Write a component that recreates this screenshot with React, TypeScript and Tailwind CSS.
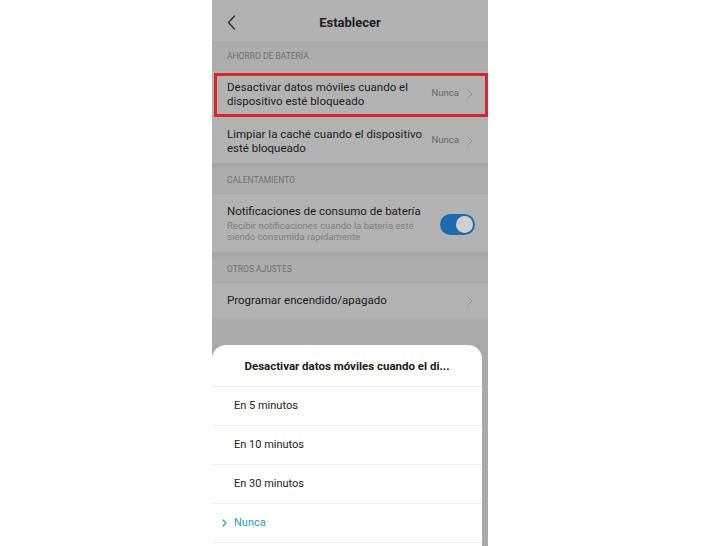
import React from "react";

const Chevron = ({ className = "" }: { className?: string }) => (
  <svg width="6" height="10" viewBox="0 0 6 10" className={className} fill="none">
    <path d="M1 1l4 4-4 4" stroke="currentColor" strokeWidth="1" strokeLinecap="round" strokeLinejoin="round" />
  </svg>
);

export default function App() {
  return (
    <div className="w-[705px] h-[546px] bg-white overflow-hidden" style={{ fontFamily: "Roboto, 'Noto Sans', sans-serif" }}>
      <div className="ml-[212px] w-[276px] h-[546px] bg-[#aaaaaa] flex flex-col">
        {/* header */}
        <div className="h-[43px] bg-[#b1b1b1] border-b border-[#a7a7a7] flex items-center relative shrink-0 pt-[3px]">
          <svg width="9" height="15" viewBox="0 0 9 15" className="ml-[15px] text-[#2a2a2a]" fill="none">
            <path d="M7.5 1L1.5 7.5l6 6.5" stroke="currentColor" strokeWidth="1.3" strokeLinecap="round" strokeLinejoin="round" />
          </svg>
          <div className="flex-1 text-center pr-[24px] text-[13px] font-bold text-[#1e1e1e]">Establecer</div>
        </div>
        {/* section 1 */}
        <div className="h-[27px] bg-[#adadad] border-b border-[#a7a7a7] flex items-center pl-[15px] text-[8.5px] text-[#6f6f6f] shrink-0">AHORRO DE BATERÍA</div>
        <div className="h-[48px] bg-[#b2b2b2] flex items-end pb-px pl-[2px] shrink-0">
          <div className="h-[44px] w-[274px] border-[3px] border-[#d8262e] flex items-center pl-[10px] pr-[12px] pb-[3px]">
            <div className="flex-1 text-[11.5px] leading-[14px] text-[#1c1c1c] whitespace-nowrap">Desactivar datos móviles cuando el<br />dispositivo esté bloqueado</div>
            <span className="text-[9.5px] text-[#666666] mr-[8px]">Nunca</span>
            <Chevron className="text-[#8e8e8e]" />
          </div>
        </div>
        <div className="h-[45px] bg-[#b2b2b2] flex items-center pl-[15px] pr-[15px] shrink-0">
          <div className="flex-1 text-[11.5px] leading-[14px] text-[#1c1c1c] whitespace-nowrap">Limpiar la caché cuando el dispositivo<br />esté bloqueado</div>
          <span className="text-[9.5px] text-[#666666] mr-[8px]">Nunca</span>
          <Chevron className="text-[#8e8e8e]" />
        </div>
        <div className="h-[4px] bg-[#a6a6a6] shrink-0" />
        {/* section 2 */}
        <div className="h-[27px] bg-[#adadad] border-b border-[#a7a7a7] flex items-center pl-[15px] text-[8.5px] text-[#6f6f6f] shrink-0">CALENTAMIENTO</div>
        <div className="h-[58px] bg-[#b2b2b2] flex items-center pl-[15px] pr-[13px] shrink-0">
          <div className="flex-1 flex flex-col">
            <div className="text-[11.5px] leading-[15px] text-[#1c1c1c] whitespace-nowrap">Notificaciones de consumo de batería</div>
            <div className="text-[9.5px] leading-[11px] text-[#7e7e7e] mt-[1px] whitespace-nowrap">Recibir notificaciones cuando la batería esté<br />siendo consumida rápidamente</div>
          </div>
          <div className="w-[35px] h-[21px] rounded-full bg-[#1d6cb0] flex items-center justify-end pr-[2px] mt-[2px]">
            <div className="w-[17px] h-[17px] rounded-full bg-[#cfcfcf]" />
          </div>
        </div>
        <div className="h-[5px] bg-[#a6a6a6] shrink-0" />
        {/* section 3 */}
        <div className="h-[26px] bg-[#adadad] border-b border-[#a7a7a7] flex items-center pl-[15px] text-[8.5px] text-[#6f6f6f] shrink-0">OTROS AJUSTES</div>
        <div className="h-[35px] bg-[#b2b2b2] flex items-center pl-[15px] pr-[15px] shrink-0">
          <div className="flex-1 text-[11.5px] text-[#1c1c1c]">Programar encendido/apagado</div>
          <Chevron className="text-[#8e8e8e]" />
        </div>
        <div className="h-[27px] shrink-0" />
        {/* bottom sheet */}
        <div className="w-[270px] flex-1 bg-white rounded-t-[14px] flex flex-col">
          <div className="h-[42px] border-b border-[#efefef] flex items-center justify-center text-[11.5px] font-bold text-[#1a1a1a] pt-[2px]">Desactivar datos móviles cuando el di...</div>
          <div className="h-[39px] border-b border-[#efefef] flex items-center pl-[22px] text-[11px] text-[#222]">En 5 minutos</div>
          <div className="h-[39px] border-b border-[#efefef] flex items-center pl-[22px] text-[11px] text-[#222]">En 10 minutos</div>
          <div className="h-[39px] border-b border-[#efefef] flex items-center pl-[22px] text-[11px] text-[#222]">En 30 minutos</div>
          <div className="h-[39px] border-b border-[#efefef] flex items-center pl-[10px] text-[11px] text-[#2a9cc4]">
            <svg width="5" height="8" viewBox="0 0 5 8" className="mr-[7px]" fill="none">
              <path d="M1 1l3 3-3 3" stroke="currentColor" strokeWidth="1.2" strokeLinecap="round" strokeLinejoin="round" />
            </svg>
            Nunca
          </div>
        </div>
      </div>
    </div>
  );
}
